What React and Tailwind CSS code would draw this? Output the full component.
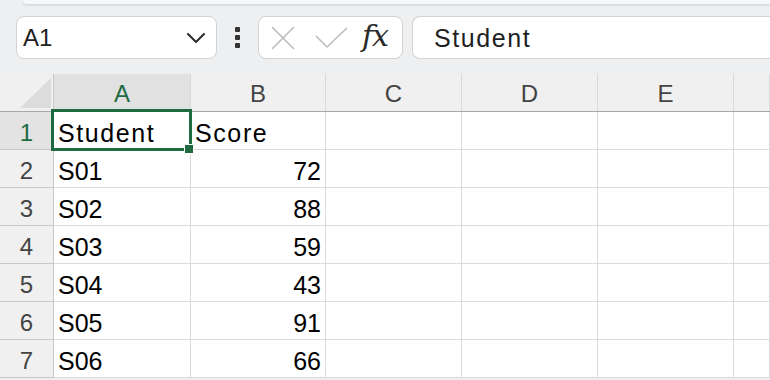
import React from "react";

const cols = ["A", "B", "C", "D", "E", ""];
const widths = ["w-[137px]", "w-[135px]", "w-[136px]", "w-[136px]", "w-[136px]", "flex-1"];
const rows = [
  ["Student", "Score"],
  ["S01", "72"],
  ["S02", "88"],
  ["S03", "59"],
  ["S04", "43"],
  ["S05", "91"],
  ["S06", "66"],
];

export default function App() {
  return (
    <div
      className="relative w-[770px] h-[380px] overflow-hidden bg-[#edeff1]"
      style={{ fontFamily: '"Liberation Sans", Arial, sans-serif' }}
    >
      {/* top strip */}
      <div className="ml-[23px] h-[4px] bg-[#f6f7f8] rounded-bl-[4px] shadow-[0_1px_3px_rgba(0,0,0,0.15)]" />

      {/* toolbar */}
      <div className="flex items-start h-[70px] pt-[12px] pl-[16px]">
        <div className="flex items-center w-[201px] h-[43px] bg-white border border-[#d2d2d2] rounded-lg pl-[6px] pr-[10px]">
          <span className="text-[24px] text-[#1f1f1f] flex-1 leading-none pt-[1px]">A1</span>
          <svg width="20" height="12" viewBox="0 0 20 12" fill="none">
            <path d="M2 2 L10 10 L18 2" stroke="#2a2a2a" strokeWidth="2" strokeLinecap="round" strokeLinejoin="round" />
          </svg>
        </div>
        <div className="flex flex-col items-center justify-center gap-[3px] w-[41px] h-[43px]">
          <div className="w-[5px] h-[5px] bg-[#333] rounded-[1px]" />
          <div className="w-[5px] h-[5px] bg-[#333] rounded-[1px]" />
          <div className="w-[5px] h-[5px] bg-[#333] rounded-[1px]" />
        </div>
        <div className="flex items-center w-[145px] h-[43px] bg-white border border-[#d2d2d2] rounded-lg">
          <svg className="ml-[12px]" width="24" height="24" viewBox="0 0 24 24" fill="none">
            <path d="M1 1 L23 23 M23 1 L1 23" stroke="#bcbcbc" strokeWidth="1.6" />
          </svg>
          <svg className="ml-[20px]" width="33" height="22" viewBox="0 0 33 22" fill="none">
            <path d="M1 9 L12 20 L32 1" stroke="#bcbcbc" strokeWidth="1.6" />
          </svg>
          <span
            className="ml-[14px] text-[30px] italic text-[#2a2a2a] leading-none -mt-[4px] tracking-[-1px]"
            style={{ fontFamily: '"DejaVu Serif", "Liberation Serif", serif' }}
          >
            fx
          </span>
        </div>
        <div className="flex items-center flex-1 ml-[9px] h-[43px] bg-white border border-[#d2d2d2] rounded-l-lg border-r-0 pl-[21px]">
          <span className="text-[25px] leading-none text-[#1f1f1f] tracking-[1.6px] pt-[1px]">Student</span>
        </div>
      </div>

      {/* grid */}
      <div className="flex flex-col">
        {/* header row */}
        <div className="flex h-[38px] bg-[#f0f0f0] border-b border-[#a8a8a8]">
          <div className="relative w-[54px] border-r border-[#c8c8c8]">
            <svg className="absolute left-[20px] top-[4px]" width="31" height="30" viewBox="0 0 31 30">
              <path d="M0 30 L31 0 L31 30 Z" fill="#dcdcdc" />
            </svg>
          </div>
          {cols.map((c, i) => (
            <div
              key={i}
              className={`${widths[i]} flex items-center justify-center pt-[2px] border-r border-[#d9d9d9] text-[24px] leading-none ${
                i === 0 ? "bg-[#e1e1e1] text-[#1e6b41]" : "text-[#444]"
              }`}
            >
              {c}
            </div>
          ))}
        </div>

        {rows.map((r, ri) => (
          <div key={ri} className="flex h-[38px]">
            <div
              className={`w-[54px] flex items-center justify-center pt-[4px] border-r border-b border-[#c8c8c8] text-[24px] leading-none ${
                ri === 0 ? "bg-[#e3e3e3] text-[#1e6b41]" : "bg-[#f0f0f0] text-[#444]"
              }`}
            >
              {ri + 1}
            </div>
            {cols.map((c, ci) => {
              const v = r[ci];
              const isNum = v && /^\d+$/.test(v);
              return (
                <div
                  key={ci}
                  className={`${widths[ci]} flex items-center pt-[5px] bg-white border-r border-b border-[#dcdcdc] text-[25px] leading-none text-black ${
                    isNum ? "justify-end pr-[4px]" : "justify-start pl-[4px]"
                  } ${ri === 0 ? "tracking-[1.6px]" : ""}`}
                >
                  {v || ""}
                </div>
              );
            })}
          </div>
        ))}
      </div>

      {/* selection */}
      <div className="absolute left-[51px] top-[109px] w-[141px] h-[42px] border-[3px] border-[#1e6b41]" />
      <div className="absolute left-[185px] top-[145px] w-[8px] h-[8px] bg-[#1e6b41] outline outline-1 outline-white" />
    </div>
  );
}
